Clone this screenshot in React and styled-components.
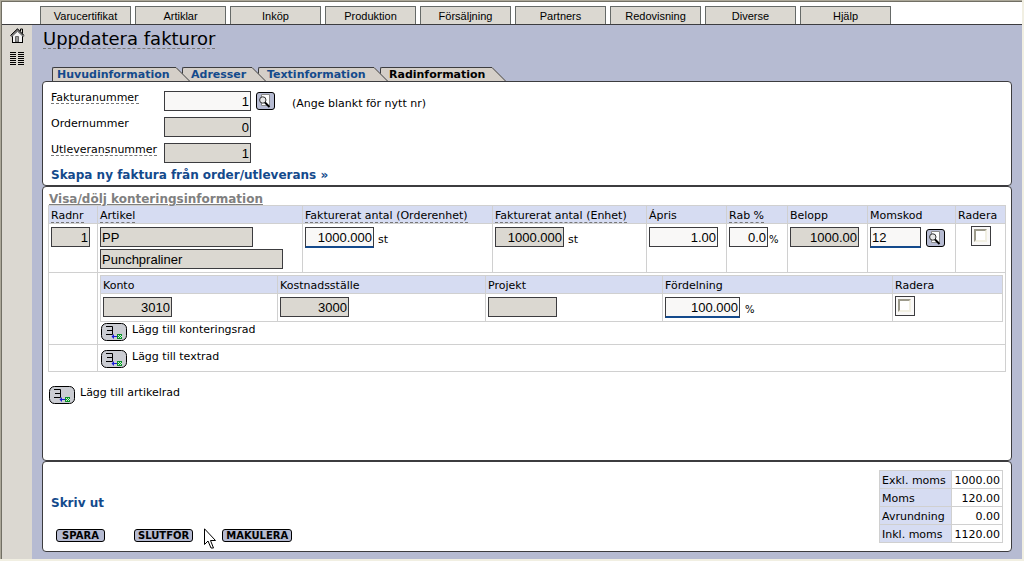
import React from "react";
import styled, { createGlobalStyle, css } from "styled-components";

const INK = "#3c3c3f";
const BLUE = "#144a8c";
const BG = "#b6bbd2";
const GREY = "#dbd8d1";
const HEAD = "#d6dcf2";
const LINE = "#d0d0d0";

const GlobalStyle = createGlobalStyle`
  * { box-sizing: border-box; }
  body {
    margin: 0;
    background: #f1efe2;
    color: #000;
    font: 11px/14px "DejaVu Sans", Verdana, sans-serif;
  }
  button, input { font: inherit; color: inherit; margin: 0; }
`;

const Frame = styled.div`
  display: flex;
  min-height: calc(100vh - 2px);
  margin-right: 2px;
  border: solid #aca899;
  border-width: 1px 0 0 1px;
`;

const Window = styled.div`
  display: flex;
  flex: 1;
  flex-direction: column;
  min-width: 0;
  border: solid #716f64;
  border-width: 1px 0 0 1px;
`;

const TopNav = styled.nav`
  display: flex;
  gap: 4px;
  padding: 4px 0 0 38px;
  background: #fff;
  border-bottom: 1px solid ${INK};
`;

const NavButton = styled.button`
  width: 91px;
  height: 18px;
  padding: 1px 0 0;
  border: 1px solid #666a68;
  border-bottom: 0;
  background: ${GREY};
  font: 11px/14px "Liberation Sans", Arial, sans-serif;
`;

const Body = styled.div`
  display: flex;
  flex: 1;
`;

const Sidebar = styled.aside`
  display: flex;
  flex-direction: column;
  align-items: center;
  gap: 8px;
  width: 30px;
  padding-top: 3px;
  background: ${GREY};
`;

const Main = styled.main`
  display: flex;
  flex-direction: column;
  flex: 1;
  min-width: 0;
  padding: 4px 10px 7px;
  background: ${BG};
`;

const dashed = css`
  border-bottom: 1px dashed #777;
`;

const Title = styled.h1`
  align-self: flex-start;
  margin: 0 0 18px 1px;
  font-size: 18px;
  line-height: 19px;
  font-weight: normal;
  ${dashed}
`;

const Link = styled.a`
  display: block;
  width: fit-content;
  color: ${BLUE};
  font-size: 12px;
  font-weight: bold;
  text-decoration: none;
`;

const Tabs = styled.div`
  display: flex;
  padding-left: 10px;
`;

const Tab = styled.a`
  position: relative;
  z-index: ${(p) => p.$z};
  width: ${(p) => p.$w}px;
  height: 14px;
  margin-right: 6px;
  padding-left: ${(p) => (p.$first ? 4 : 8)}px;
  border-top: 1px solid ${INK};
  border-left: 1px solid ${INK};
  border-top-left-radius: 2px;
  background: #d5cfc8;
  color: ${(p) => (p.$active ? "#000" : BLUE)};
  font-weight: bold;
  text-decoration: none;
  white-space: nowrap;
`;

const Slant = styled.svg`
  position: absolute;
  top: -1px;
  left: 100%;
`;

const Panel = styled.section`
  flex: ${(p) => (p.$grow ? "1 0 auto" : "none")};
  border: 1px solid ${INK};
  border-radius: 4px;
  background: #fff;
  padding: ${(p) => p.$pad};
`;

const FormGrid = styled.div`
  display: grid;
  grid-template-columns: 113px 87px 1fr;
  row-gap: 6px;
  padding-bottom: 5px;
`;

const FormLabel = styled.label`
  justify-self: start;
  align-self: start;
  padding-top: 2px;
  line-height: 10px;
  ${(p) => p.$dash && dashed}
`;

const Field = styled.input`
  display: block;
  width: ${(p) => p.$w}px;
  height: ${(p) => (p.$required ? 21 : 20)}px;
  padding: 1px 1px 0;
  border: 1px solid ${INK};
  border-radius: 0;
  outline: 0;
  background: ${(p) => (p.readOnly ? GREY : "#f9f8f7")};
  font: 13px/16px "Liberation Sans", Arial, sans-serif;
  text-align: ${(p) => (p.$left ? "left" : "right")};
  ${(p) => p.$required && css`border-bottom: 2px solid ${BLUE};`}
`;

const Hint = styled.div`
  display: flex;
  align-items: flex-start;
  gap: 17px;
  height: 20px;
  padding: 1px 0 0 5px;
`;

const HintText = styled.span`
  padding-top: 5px;
`;

const IconButton = styled.button`
  flex: none;
  display: block;
  padding: 0;
  border: 0;
  background: none;
  svg { display: block; }
`;

const ToggleLink = styled(Link)`
  padding-left: 1px;
  margin-top: 6px;
  color: #808080;
  line-height: 12px;
  text-decoration: underline;
`;

const Grid = styled.table`
  width: 100%;
  table-layout: fixed;
  border-collapse: collapse;
`;

const Th = styled.th`
  height: 18px;
  padding: 3px 0 0 2px;
  border: 1px solid ${LINE};
  background: ${HEAD};
  font-weight: normal;
  line-height: 14px;
  text-align: left;
  vertical-align: top;
  white-space: nowrap;
`;

const Dashed = styled.span`
  display: inline-block;
  vertical-align: top;
  line-height: 13px;
  ${dashed}
`;

const Td = styled.td`
  height: ${(p) => p.$h}px;
  padding: ${(p) => p.$pad || "3px 2px"};
  border: 1px solid ${LINE};
  vertical-align: top;
`;

const FieldRow = styled.div`
  display: flex;
  align-items: flex-start;
  gap: ${(p) => p.$gap}px;
`;

const Stack = styled.div`
  display: grid;
  gap: 2px;
`;

const Unit = styled.span`
  padding-top: 6px;
  font-size: ${(p) => (p.$small ? 10 : 11)}px;
`;

const SearchSlot = styled.span`
  padding-top: 2px;
`;

const CheckFrame = styled.label`
  display: block;
  width: 20px;
  height: 20px;
  margin: ${(p) => (p.$center ? "-1px auto 0" : "-1px 0 0")};
  padding: 2px;
  border: 1px solid ${INK};
  background: #f9f8f7;
`;

const Check = styled.input`
  appearance: none;
  display: block;
  width: 13px;
  height: 13px;
  margin: 0;
  border: 2px solid;
  border-color: #9c9a8b #f1efe2 #f1efe2 #9c9a8b;
  background: #fff;
`;

const AddRow = styled.div`
  display: flex;
  gap: 5px;
  padding: ${(p) => p.$pad};
`;

const Footer = styled.div`
  display: flex;
  justify-content: space-between;
`;

const Actions = styled.div`
  position: relative;
  padding-top: 26px;
`;

const ButtonRow = styled.div`
  display: flex;
  gap: 29px;
  padding: 19px 0 0 5px;
`;

const ActionButton = styled.button`
  min-width: 49px;
  height: 13px;
  padding: 0 3px;
  border: 1px solid #000;
  border-radius: 3px;
  background: ${BG};
  font-size: 10px;
  font-weight: bold;
  line-height: 11px;
`;

const Cursor = styled.svg`
  position: absolute;
  left: 153px;
  top: 58px;
`;

const Totals = styled.table`
  border-collapse: collapse;
  line-height: 14px;
  th, td {
    height: 18px;
    padding: 2px 2px 0;
    border: 1px solid ${LINE};
    font-weight: normal;
  }
  th { width: 72px; background: ${HEAD}; text-align: left; white-space: nowrap; }
  td { width: 51px; text-align: right; }
`;

const HomeIcon = () => (
  <svg width="15" height="16" viewBox="0 0 15 16">
    <path d="M2.5 7.5L7.5 3L12.5 7.5V14.5H2.5Z" fill="#f4f4f4" stroke="#000" />
    <path d="M1 8.5L7.5 2L14 8.5" fill="none" stroke="#777" strokeWidth="2" />
    <path d="M.5 7.5L7.5 .8L13.5 7M10.5 3V1H12.5V5.5" fill="none" stroke="#000" />
    <path d="M5.5 14V8.5H8.5V14Z" fill="#999" stroke="#666" />
    <path d="M2 14.5H13" stroke="#000" />
  </svg>
);

const ListIcon = () => (
  <svg width="14" height="13" viewBox="0 0 14 13" shapeRendering="crispEdges">
    {[0, 2, 4, 6, 8, 10, 12].map((y) => (
      <path key={y} d={`M0 ${y + 0.5}H6M8 ${y + 0.5}H14`} stroke="#000" />
    ))}
  </svg>
);

const SearchButton = () => (
  <IconButton type="button" aria-label="Sök">
    <svg width="19" height="18" viewBox="0 0 19 18">
      <rect x=".5" y=".5" width="18" height="17" rx="2.5" fill={BG} stroke="#000" />
      <path d="M5.5 2.5H13.5V13.5H5.5Z" fill="#fff" stroke="#8a8a8a" />
      <circle cx="6.8" cy="8" r="3.2" fill="#e8e8e8" stroke="#333" />
      <path d="M9 10.5L13.5 15" stroke="#000" strokeWidth="2" />
    </svg>
  </IconButton>
);

const AddButton = ({ label }) => (
  <IconButton type="button" aria-label={label}>
    <svg width="26" height="18" viewBox="0 0 26 18">
      <rect x=".5" y=".5" width="25" height="17" rx="5" fill="#cbcdd3" stroke="#000" />
      <path d="M5 3.5H11.5V11.5H5M6 7.5H11" fill="none" stroke="#000" />
      <path d="M11 13H16V14H11ZM13 11V16L10.5 13.5Z" fill="#1c1cd8" />
      <rect x="16" y="11" width="5" height="5" fill="#0b8f2a" />
      <path d="M17 12h1v1h-1zM19 12h1v1h-1zM18 13h1v1h-1zM20 13h1v1h-1zM17 14h1v1h-1zM19 14h1v1h-1z" fill="#c8ffd0" />
    </svg>
  </IconButton>
);

const navItems = ["Varucertifikat", "Artiklar", "Inköp", "Produktion", "Försäljning", "Partners", "Redovisning", "Diverse", "Hjälp"];

const tabs = [
  { text: "Huvudinformation", w: 124 },
  { text: "Adresser", w: 70 },
  { text: "Textinformation", w: 116 },
  { text: "Radinformation", w: 112 },
];

const totals = [["Exkl. moms", "1000.00"], ["Moms", "120.00"], ["Avrundning", "0.00"], ["Inkl. moms", "1120.00"]];

const rowColumns = [49, 205, 190, 154, 80, 61, 80, 88, 50];
const accountColumns = [177, 208, 177, 230, 110];

const Columns = ({ widths }) => (
  <colgroup>{widths.map((w, i) => <col key={i} style={{ width: w }} />)}</colgroup>
);

export default function App() {
  return (
    <>
      <GlobalStyle />
      <Frame>
        <Window>
          <TopNav>
            {navItems.map((t) => <NavButton key={t} type="button">{t}</NavButton>)}
          </TopNav>
          <Body>
            <Sidebar>
              <IconButton type="button" aria-label="Hem"><HomeIcon /></IconButton>
              <IconButton type="button" aria-label="Lista"><ListIcon /></IconButton>
            </Sidebar>
            <Main>
              <Title>Uppdatera fakturor</Title>
              <Tabs>
                {tabs.map((t, i) => (
                  <Tab key={t.text} href="#" $w={t.w} $z={tabs.length - i} $first={i === 0} $active={i === 3}>
                    {t.text}
                    <Slant width="14" height="14" viewBox="0 0 14 14">
                      <path d="M0 0L14 14H0Z" fill="#d5cfc8" />
                      <path d="M0 .5L13.5 14" fill="none" stroke={INK} />
                    </Slant>
                  </Tab>
                ))}
              </Tabs>
              <Panel $pad="9px 8px 3px">
                <FormGrid>
                  <FormLabel htmlFor="invoice" $dash>Fakturanummer</FormLabel>
                  <Field id="invoice" $w={87} defaultValue="1" />
                  <Hint><SearchButton /><HintText>(Ange blankt för nytt nr)</HintText></Hint>
                  <FormLabel htmlFor="order">Ordernummer</FormLabel>
                  <Field id="order" $w={87} defaultValue="0" readOnly />
                  <span />
                  <FormLabel htmlFor="delivery" $dash>Utleveransnummer</FormLabel>
                  <Field id="delivery" $w={87} defaultValue="1" readOnly />
                </FormGrid>
                <Link href="#">Skapa ny faktura från order/utleverans »</Link>
              </Panel>
              <Panel $grow $pad="0 5px">
                <ToggleLink href="#">Visa/dölj konteringsinformation</ToggleLink>
                <Grid>
                  <Columns widths={rowColumns} />
                  <thead>
                    <tr>
                      <Th><Dashed>Radnr</Dashed></Th>
                      <Th><Dashed>Artikel</Dashed></Th>
                      <Th><Dashed>Fakturerat antal (Orderenhet)</Dashed></Th>
                      <Th><Dashed>Fakturerat antal (Enhet)</Dashed></Th>
                      <Th>Ápris</Th>
                      <Th><Dashed>Rab %</Dashed></Th>
                      <Th>Belopp</Th>
                      <Th>Momskod</Th>
                      <Th>Radera</Th>
                    </tr>
                  </thead>
                  <tbody>
                    <tr>
                      <Td><Field $w={39} aria-label="Radnr" defaultValue="1" readOnly /></Td>
                      <Td>
                        <Stack>
                          <Field $w={153} $left aria-label="Artikel" defaultValue="PP" readOnly />
                          <Field $w={183} $left aria-label="Artikelnamn" defaultValue="Punchpraliner" readOnly />
                        </Stack>
                      </Td>
                      <Td><FieldRow $gap={4}><Field $w={69} $required aria-label="Fakturerat antal (Orderenhet)" defaultValue="1000.000" /><Unit>st</Unit></FieldRow></Td>
                      <Td><FieldRow $gap={4}><Field $w={69} aria-label="Fakturerat antal (Enhet)" defaultValue="1000.000" readOnly /><Unit>st</Unit></FieldRow></Td>
                      <Td><Field $w={69} aria-label="Ápris" defaultValue="1.00" /></Td>
                      <Td><FieldRow $gap={1}><Field $w={39} aria-label="Rab %" defaultValue="0.0" /><Unit $small>%</Unit></FieldRow></Td>
                      <Td><Field $w={69} aria-label="Belopp" defaultValue="1000.00" readOnly /></Td>
                      <Td><FieldRow $gap={5}><Field $w={51} $left $required aria-label="Momskod" defaultValue="12" /><SearchSlot><SearchButton /></SearchSlot></FieldRow></Td>
                      <Td><CheckFrame $center><Check type="checkbox" aria-label="Radera rad" /></CheckFrame></Td>
                    </tr>
                    <tr>
                      <Td />
                      <Td colSpan={8} $pad="2px 2px 3px">
                        <Grid>
                          <Columns widths={accountColumns} />
                          <thead>
                            <tr><Th>Konto</Th><Th>Kostnadsställe</Th><Th>Projekt</Th><Th>Fördelning</Th><Th>Radera</Th></tr>
                          </thead>
                          <tbody>
                            <tr>
                              <Td $h={28}><Field $w={69} aria-label="Konto" defaultValue="3010" readOnly /></Td>
                              <Td><Field $w={69} aria-label="Kostnadsställe" defaultValue="3000" readOnly /></Td>
                              <Td><Field $w={69} aria-label="Projekt" defaultValue="" readOnly /></Td>
                              <Td><FieldRow $gap={5}><Field $w={75} $required aria-label="Fördelning" defaultValue="100.000" /><Unit $small>%</Unit></FieldRow></Td>
                              <Td><CheckFrame><Check type="checkbox" aria-label="Radera konteringsrad" /></CheckFrame></Td>
                            </tr>
                          </tbody>
                        </Grid>
                        <AddRow $pad="1px 0 0 1px"><AddButton label="Lägg till konteringsrad" />Lägg till konteringsrad</AddRow>
                      </Td>
                    </tr>
                    <tr>
                      <Td />
                      <Td colSpan={8} $pad="5px 0 3px 3px">
                        <AddRow><AddButton label="Lägg till textrad" />Lägg till textrad</AddRow>
                      </Td>
                    </tr>
                  </tbody>
                </Grid>
                <AddRow $pad="14px 0 0 1px"><AddButton label="Lägg till artikelrad" />Lägg till artikelrad</AddRow>
              </Panel>
              <Panel $pad="8px">
                <Footer>
                  <Actions>
                    <Link href="#">Skriv ut</Link>
                    <ButtonRow>
                      <ActionButton type="button">SPARA</ActionButton>
                      <ActionButton type="button">SLUTFÖR</ActionButton>
                      <ActionButton type="button">MAKULERA</ActionButton>
                    </ButtonRow>
                    <Cursor width="13" height="21" viewBox="0 0 13 21">
                      <path d="M.5 .8V16.5L4 13L7 20H9.5L6.5 12.5H11.5Z" fill="#fff" stroke="#000" />
                    </Cursor>
                  </Actions>
                  <Totals>
                    <tbody>
                      {totals.map(([k, v]) => <tr key={k}><th scope="row">{k}</th><td>{v}</td></tr>)}
                    </tbody>
                  </Totals>
                </Footer>
              </Panel>
            </Main>
          </Body>
        </Window>
      </Frame>
    </>
  );
}
